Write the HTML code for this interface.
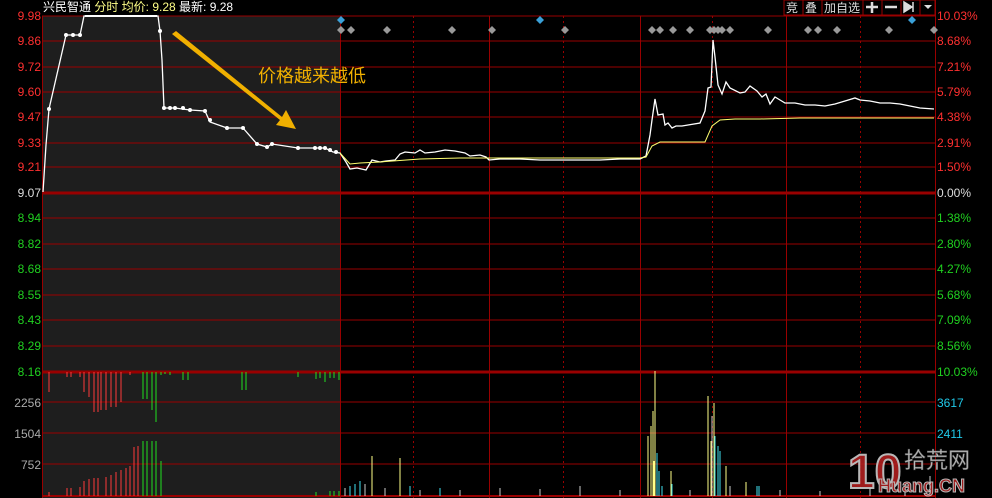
<!DOCTYPE html>
<html><head><meta charset="utf-8"><style>
body{margin:0;background:#000;width:992px;height:498px;overflow:hidden;font-family:"Liberation Sans","Noto Sans CJK SC",sans-serif}
</style></head><body>
<svg width="992" height="498" xmlns="http://www.w3.org/2000/svg" style="position:absolute;left:0;top:0">
<defs><path id="d" d="M0 -4l4 4-4 4-4-4z"/></defs>
<rect x="0" y="0" width="992" height="498" fill="#000"/>
<rect x="43" y="16" width="297" height="482" fill="#1e1e1e"/>
<g stroke="#990000" stroke-width="1">
<line x1="42" y1="16" x2="935" y2="16"/>
<line x1="42" y1="41" x2="935" y2="41"/><line x1="42" y1="67" x2="935" y2="67"/>
<line x1="42" y1="92" x2="935" y2="92"/><line x1="42" y1="117" x2="935" y2="117"/>
<line x1="42" y1="143" x2="935" y2="143"/><line x1="42" y1="167" x2="935" y2="167"/>
<line x1="42" y1="218" x2="935" y2="218"/><line x1="42" y1="244" x2="935" y2="244"/>
<line x1="42" y1="269" x2="935" y2="269"/><line x1="42" y1="295" x2="935" y2="295"/>
<line x1="42" y1="320" x2="935" y2="320"/><line x1="42" y1="346" x2="935" y2="346"/>
<line x1="42" y1="402" x2="935" y2="402"/><line x1="42" y1="433" x2="935" y2="433"/>
<line x1="42" y1="464" x2="935" y2="464"/>
<line x1="42.5" y1="16" x2="42.5" y2="498"/><line x1="935.5" y1="0" x2="935.5" y2="498"/>
<line x1="340.5" y1="16" x2="340.5" y2="498"/><line x1="489.5" y1="16" x2="489.5" y2="498"/>
<line x1="640.5" y1="16" x2="640.5" y2="498"/><line x1="786.5" y1="16" x2="786.5" y2="498"/>
</g>
<g stroke="#990000" stroke-width="1" stroke-dasharray="2,3">
<line x1="413.5" y1="16" x2="413.5" y2="498"/><line x1="563.5" y1="16" x2="563.5" y2="498"/>
<line x1="712.5" y1="16" x2="712.5" y2="498"/><line x1="860.5" y1="16" x2="860.5" y2="498"/>
</g>
<line x1="42" y1="193" x2="935" y2="193" stroke="#990000" stroke-width="3"/>
<line x1="42" y1="372" x2="935" y2="372" stroke="#990000" stroke-width="3"/>
<line x1="42" y1="496" x2="935" y2="496" stroke="#990000" stroke-width="2"/>
<g stroke="#990000" fill="none"><rect x="784" y="0" width="151" height="15"/>
<line x1="803" y1="0" x2="803" y2="15"/><line x1="822" y1="0" x2="822" y2="15"/><line x1="863" y1="0" x2="863" y2="15"/><line x1="882" y1="0" x2="882" y2="15"/><line x1="901" y1="0" x2="901" y2="15"/><line x1="920" y1="0" x2="920" y2="15"/></g>
<g fill="#ddd" font-size="12"><text x="786" y="12">竞</text><text x="805" y="12">叠</text><text x="824" y="12">加自选</text></g>
<path d="M866 7h12M872 2v11" stroke="#ddd" stroke-width="2.5"/><path d="M885 7h12" stroke="#ddd" stroke-width="2.5"/>
<path d="M904 2l8 5-8 5zM913 2v10" fill="#ddd" stroke="#ddd" stroke-width="1.5"/><path d="M924 5h8l-4 4z" fill="#ddd"/>
<text x="43" y="11" font-size="12" fill="#fff">兴民智通 <tspan fill="#ffff88">分时 均价: 9.28</tspan> 最新: 9.28</text>
<g font-size="12" fill="#ff3030" text-anchor="end">
<text x="41" y="20">9.98</text><text x="41" y="45">9.86</text><text x="41" y="71">9.72</text><text x="41" y="96">9.60</text><text x="41" y="121">9.47</text><text x="41" y="147">9.33</text><text x="41" y="171">9.21</text></g>
<text x="41" y="197" font-size="12" fill="#ddd" text-anchor="end">9.07</text>
<g font-size="12" fill="#20d020" text-anchor="end">
<text x="41" y="222">8.94</text><text x="41" y="248">8.82</text><text x="41" y="273">8.68</text><text x="41" y="299">8.55</text><text x="41" y="324">8.43</text><text x="41" y="350">8.29</text><text x="41" y="376">8.16</text></g>
<g font-size="12" fill="#aaa" text-anchor="end"><text x="41" y="407">2256</text><text x="41" y="438">1504</text><text x="41" y="469">752</text></g>
<g font-size="12" fill="#ff3030"><text x="937" y="20">10.03%</text><text x="937" y="45">8.68%</text><text x="937" y="71">7.21%</text><text x="937" y="96">5.79%</text><text x="937" y="121">4.38%</text><text x="937" y="147">2.91%</text><text x="937" y="171">1.50%</text></g>
<text x="937" y="197" font-size="12" fill="#ddd">0.00%</text>
<g font-size="12" fill="#20d020"><text x="937" y="222">1.38%</text><text x="937" y="248">2.80%</text><text x="937" y="273">4.27%</text><text x="937" y="299">5.68%</text><text x="937" y="324">7.09%</text><text x="937" y="350">8.56%</text><text x="937" y="376">10.03%</text></g>
<g font-size="12" fill="#20c8e8"><text x="937" y="407">3617</text><text x="937" y="438">2411</text></g>
<g fill="#999">
<use href="#d" x="341" y="30"/><use href="#d" x="351" y="30"/><use href="#d" x="387" y="30"/><use href="#d" x="452" y="30"/><use href="#d" x="492" y="30"/><use href="#d" x="565" y="30"/><use href="#d" x="652" y="30"/><use href="#d" x="660" y="30"/><use href="#d" x="673" y="30"/><use href="#d" x="690" y="30"/><use href="#d" x="710" y="30"/><use href="#d" x="714" y="30"/><use href="#d" x="718" y="30"/><use href="#d" x="722" y="30"/><use href="#d" x="730" y="30"/><use href="#d" x="768" y="30"/><use href="#d" x="808" y="30"/><use href="#d" x="818" y="30"/><use href="#d" x="837" y="30"/><use href="#d" x="889" y="30"/><use href="#d" x="934" y="30"/></g>
<g fill="#3aa0d8"><use href="#d" x="341" y="20"/><use href="#d" x="540" y="20"/><use href="#d" x="912" y="20"/></g>
<polyline fill="none" stroke="#fff" stroke-width="1.3" points="43,192 46,145 49,109 66,35 80,35 84,16 158,16 160,31 162,60 164,108 175,108 190,110 205,111 210,122 227,128 243,128 257,144 267,147 272,144 298,148 315,148 325,148 333,152 340,153 346,162 350,169 357,168 366,170 372,160 380,162 386,161 395,160 400,154 405,152 415,153 420,150 425,153 435,152 445,150 455,151 465,153 470,156 480,155 486,157 489,160 500,159 510,159 520,159 540,160 560,160 580,160 600,160 620,159 640,159 646,156 650,135 652,120 655,99 658,115 663,114 665,125 668,123 672,128 676,126 682,126 688,125 700,123 705,111 708,88 711,87 713,40 715,57 718,85 722,94 726,82 730,88 740,93 745,92 750,86 757,91 762,97 766,94 770,104 775,97 780,100 785,103 795,103 805,105 815,105 825,106 835,104 845,101 855,98 860,100 870,101 880,103 890,103 900,104 910,106 920,108 934,109"/>
<polyline fill="none" stroke="#ffff70" stroke-width="1" points="340,153 350,164 360,163 380,162 420,159 460,158 500,158 560,158 640,158 646,157 652,146 660,142 680,142 705,142 712,126 720,120 735,119 760,119 800,118 850,118 934,118"/>
<g fill="#fff"><circle cx="49" cy="109" r="2"/><circle cx="66" cy="35" r="2"/><circle cx="73" cy="35" r="2"/><circle cx="80" cy="35" r="2"/><circle cx="160" cy="31" r="2"/><circle cx="164" cy="108" r="2"/><circle cx="170" cy="108" r="2"/><circle cx="175" cy="108" r="2"/><circle cx="183" cy="108" r="2"/><circle cx="190" cy="110" r="2"/><circle cx="205" cy="111" r="2"/><circle cx="210" cy="120" r="2"/><circle cx="227" cy="128" r="2"/><circle cx="243" cy="128" r="2"/><circle cx="257" cy="144" r="2"/><circle cx="267" cy="147" r="2"/><circle cx="272" cy="144" r="2"/><circle cx="298" cy="148" r="2"/><circle cx="315" cy="148" r="2"/><circle cx="320" cy="148" r="2"/><circle cx="325" cy="148" r="2"/><circle cx="330" cy="150" r="2"/><circle cx="336" cy="152" r="2"/></g>
<rect x="85" y="15" width="72" height="2" fill="#fff"/>
<polygon points="172,34 176,31 282,117 286,110 296,129 276,125 280,120" fill="#f0b000"/>
<text x="258" y="82" font-size="18" fill="#f0b000">价格越来越低</text>
<g stroke="#ff3b3b" stroke-width="1">
<path d="M49 372v20M67 372v5M71 372v5M80 372v5M84 372v20M89 372v25M94 372v40M98 372v40M101 372v38M106 372v38M111 372v35M116 372v35M121 372v30M130 372v3"/>
<path d="M49 496v-4M67 496v-8M71 496v-8M80 496v-9M84 496v-15M89 496v-17M94 496v-18M98 496v-18M106 496v-19M111 496v-21M116 496v-24M121 496v-26M126 496v-28M130 496v-30M134 496v-49M138 496v-50"/></g>
<g stroke="#20e020" stroke-width="1"><path d="M143 372v27M147 372v27M152 372v38M156 372v50M161 372v3M165 372v2M170 372v3M183 372v8M188 372v8M242 372v18M246 372v18M298 372v5M316 372v7M320 372v6M325 372v10M330 372v6M334 372v6M339 372v8"/>
<path d="M143 496v-55M147 496v-55M152 496v-55M156 496v-55M161 496v-35M316 496v-4M330 496v-5M334 496v-5M339 496v-5"/></g>
<g stroke-width="1" stroke="#ffff88"><path d="M648 496v-60M651 496v-70M653 496v-85M655 496v-125M671 496v-25M708 496v-100M714 496v-93M711 496v-55M726 496v-30M746 496v-14M372 496v-40M400 496v-38M654 496v-35"/></g>
<g stroke-width="1" stroke="#40e0f0"><path d="M657 496v-43M659 496v-25M662 496v-10M672 496v-12M715 496v-60M718 496v-50M720 496v-45M757 496v-10M759 496v-10M350 496v-10M355 496v-12M360 496v-15M410 496v-10M440 496v-8"/></g>
<g stroke-width="1" stroke="#ccc"><path d="M712 496v-80M345 496v-8M365 496v-12M385 496v-8M420 496v-6M460 496v-6M500 496v-8M540 496v-7M580 496v-10M620 496v-6M690 496v-6M730 496v-10M780 496v-6M820 496v-5M870 496v-8M905 496v-10M930 496v-20"/></g>
<g opacity="0.9"><text x="848" y="488" font-size="48" font-weight="bold" fill="#b02020" stroke="#ccc" stroke-width="2">10</text>
<text x="904" y="468" font-size="22" fill="#ccc" stroke="#666" stroke-width="0.5">拾荒网</text>
<text x="878" y="492" font-size="18" font-weight="bold" fill="#b02020" stroke="#ccc" stroke-width="1">Huang.CN</text></g>
</svg>
</body></html>
